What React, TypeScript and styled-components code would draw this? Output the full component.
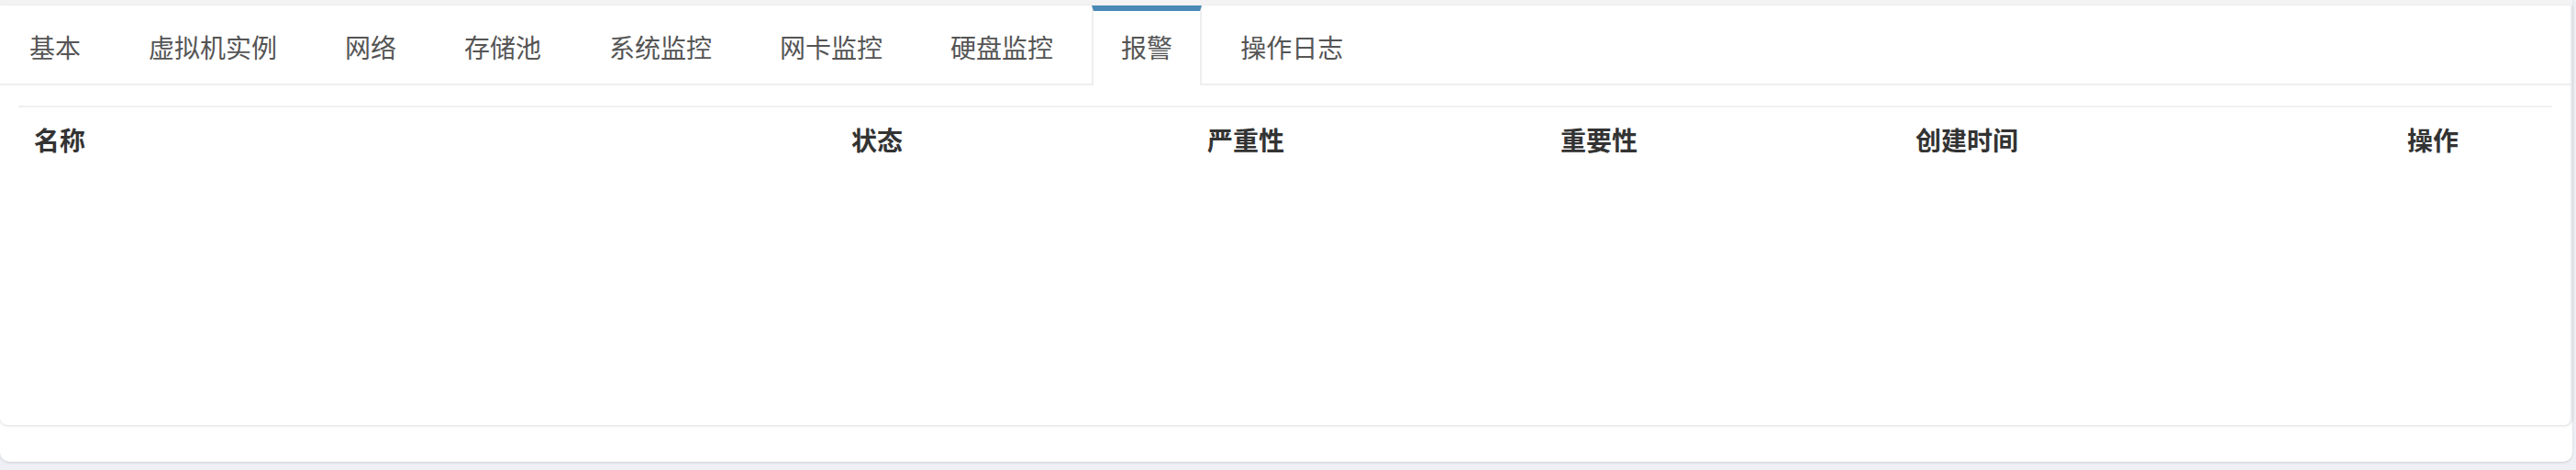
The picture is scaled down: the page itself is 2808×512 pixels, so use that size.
import React from "react";
import styled, { createGlobalStyle } from "styled-components";

const Global = createGlobalStyle`
  html, body { margin: 0; padding: 0; }
  body {
    background: #eef0f5;
    font-family: "Noto Sans CJK SC", "Noto Sans", sans-serif;
  }
`;

const Page = styled.div`
  width: 2804px;
  height: 512px;
  display: flex;
  flex-direction: column;
`;

const OuterCard = styled.div`
  background: #ffffff;
  border-radius: 0 0 10px 10px;
  box-shadow: 0 1px 3px rgba(0, 0, 0, 0.14);
  height: 503px;
  display: flex;
  flex-direction: column;
`;

const TopStrip = styled.div`
  height: 6px;
  background: #f3f3f4;
  flex: none;
`;

const Panel = styled.div`
  height: 457px;
  background: #ffffff;
  border-right: 2px solid #e9eaee;
  border-radius: 0 0 8px 8px;
  box-shadow: 0 1px 3px rgba(0, 0, 0, 0.14);
  display: flex;
  flex-direction: column;
  box-sizing: border-box;
`;

const TabBar = styled.div`
  display: flex;
  border-bottom: 2px solid #eeeeee;
  height: 87px;
  box-sizing: border-box;
  flex: none;
`;

const Tab = styled.div<{ $active?: boolean }>`
  box-sizing: border-box;
  height: ${(p) => (p.$active ? "87px" : "85px")};
  margin-right: 10px;
  padding: 0 30px;
  border-top: 6px solid ${(p) => (p.$active ? "#4a89b5" : "transparent")};
  border-left: 2px solid ${(p) => (p.$active ? "#eeeeee" : "transparent")};
  border-right: 2px solid ${(p) => (p.$active ? "#eeeeee" : "transparent")};
  background: ${(p) => (p.$active ? "#ffffff" : "transparent")};
  position: relative;
  z-index: ${(p) => (p.$active ? 1 : 0)};
  font-size: 28px;
  line-height: 79px;
  color: #555555;
  white-space: nowrap;
  cursor: pointer;
`;

const Table = styled.div`
  margin: 22px 20px 0;
  border-top: 2px solid #f0f0f0;
`;

const HeaderRow = styled.div`
  display: grid;
  grid-template-columns: 891px 388px 385px 387px 536px 1fr;
  height: 70px;
`;

const HeadCell = styled.div`
  padding-left: 17px;
  font-size: 28px;
  font-weight: 700;
  line-height: 70px;
  color: #333333;
  white-space: nowrap;
`;

const tabs = ["基本", "虚拟机实例", "网络", "存储池", "系统监控", "网卡监控", "硬盘监控", "报警", "操作日志"];
const columns = ["名称", "状态", "严重性", "重要性", "创建时间", "操作"];

export default function App() {
  return (
    <>
      <Global />
      <Page>
        <OuterCard>
          <TopStrip />
          <Panel>
            <TabBar>
              {tabs.map((t) => (
                <Tab key={t} $active={t === "报警"}>
                  {t}
                </Tab>
              ))}
            </TabBar>
            <Table>
              <HeaderRow>
                {columns.map((c) => (
                  <HeadCell key={c}>{c}</HeadCell>
                ))}
              </HeaderRow>
            </Table>
          </Panel>
        </OuterCard>
      </Page>
    </>
  );
}
